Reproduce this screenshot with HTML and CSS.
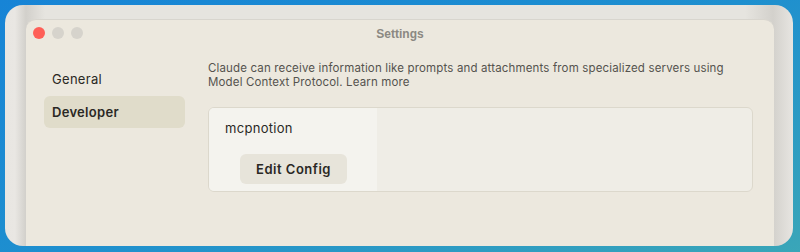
FILE: index.html
```html
<!DOCTYPE html>
<html>
<head>
<meta charset="utf-8">
<link rel="stylesheet" href="styles.css">
</head>
<body>
<div class="desktop">
  <div class="back-window">
    <div class="window">
      <div class="titlebar">
        <div class="lights">
          <span class="light red"></span>
          <span class="light"></span>
          <span class="light"></span>
        </div>
        <div class="title">Settings</div>
      </div>
      <div class="body">
        <nav class="sidebar">
          <div class="nav-item">General</div>
          <div class="nav-item active">Developer</div>
        </nav>
        <main class="content">
          <p class="desc">Claude can receive information like prompts and attachments from specialized servers using Model Context Protocol. Learn more</p>
          <div class="card">
            <div class="server">
              <div class="server-name">mcpnotion</div>
              <button class="btn">Edit Config</button>
            </div>
            <div class="detail"></div>
          </div>
        </main>
      </div>
    </div>
  </div>
</div>
</body>
</html>
```
FILE: styles.css
```css
* { box-sizing: border-box; }
html, body { margin: 0; padding: 0; }
body {
  width: 800px;
  height: 252px;
  overflow: hidden;
  background: linear-gradient(160deg, #1784d6 0%, #1e8fcf 50%, #3aa6b8 100%);
  font-family: "Inter", "Lato", sans-serif;
}
.desktop {
  padding: 5px 7px 0 5px;
}
.back-window {
  height: 241px;
  border-radius: 18px;
  background: linear-gradient(90deg, #e8e6e2 0px, #e9e7e3 10px, #d2d0cb 21px, #e6e4df 40px, #e6e4df 740px, #d3d1cc 768px, #e7e5e1 788px);
  padding: 14px 19px 0 21px;
  overflow: hidden;
  display: flex;
}
.window {
  flex: 1;
  background: #ece8de;
  border-radius: 10px 10px 0 0;
  border-top: 1px solid #d8d5ce;
  display: flex;
  flex-direction: column;
}
.titlebar {
  height: 28px;
  position: relative;
  display: flex;
  align-items: center;
  justify-content: center;
}
.lights {
  position: absolute;
  left: 7px;
  top: 7px;
  display: flex;
  gap: 7px;
}
.light {
  width: 12px;
  height: 12px;
  border-radius: 50%;
  background: #d6d3cc;
}
.light.red { background: #fe5f57; }
.title {
  font-family: "Liberation Sans", sans-serif;
  font-weight: bold;
  font-size: 12px;
  color: #8b8882;
}
.body {
  display: flex;
  flex: 1;
}
.sidebar {
  width: 141px;
  margin-left: 18px;
  padding-top: 15px;
  display: flex;
  flex-direction: column;
  gap: 1px;
}
.nav-item {
  height: 32px;
  line-height: 32px;
  padding-left: 8px;
  font-size: 13px;
  color: #2a2824;
  border-radius: 6px;
  letter-spacing: 0.3px;
}
.nav-item.active {
  background: #e0dcca;
  font-weight: 600;
}
.content {
  margin-left: 23px;
  width: 545px;
  padding-top: 13px;
}
.desc {
  margin: 0;
  max-width: 535px;
  font-size: 11.5px;
  line-height: 14px;
  color: #55534e;
  letter-spacing: 0.15px;
}
.card {
  margin-top: 18px;
  height: 85px;
  border: 1px solid #dcd8cc;
  border-radius: 6px;
  background: #efede6;
  display: flex;
  overflow: hidden;
}
.server {
  width: 168px;
  background: #f4f3ee;
  padding: 12px 0 0 16px;
}
.server-name {
  font-size: 13px;
  color: #2a2824;
  letter-spacing: 0.3px;
}
.btn {
  display: block;
  margin-top: 18px;
  margin-left: 15px;
  width: 107px;
  height: 30px;
  padding: 0;
  border: none;
  border-radius: 6px;
  background: #e7e4da;
  font-family: "Inter", "Lato", sans-serif;
  font-size: 13px;
  font-weight: 600;
  color: #2a2824;
  letter-spacing: 0.5px;
}
.detail { flex: 1; }
```
